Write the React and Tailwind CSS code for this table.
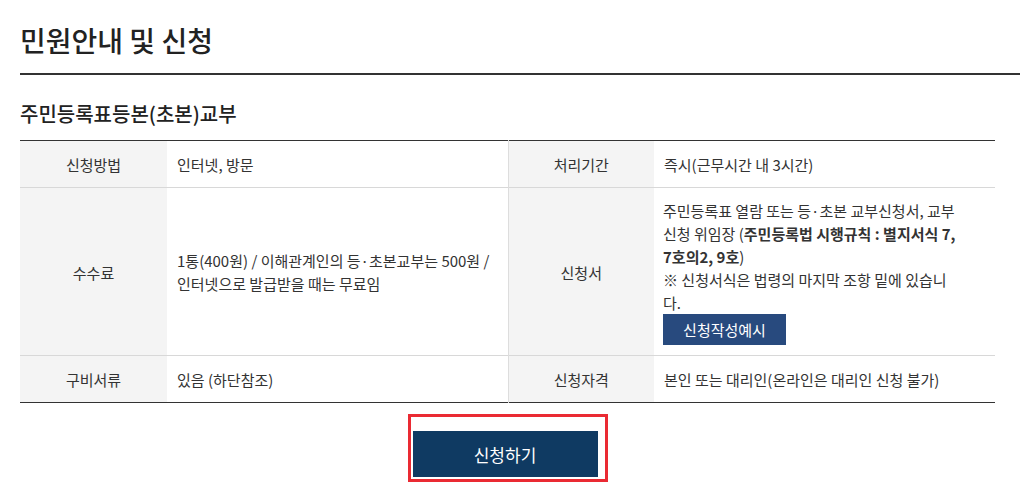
const FONT = "font-['Noto_Sans_CJK_KR','Noto_Sans',sans-serif]";

function Th({ children }) {
  return (
    <th className="bg-[#f4f4f4] text-center font-normal text-[#333] pt-[12px] pb-[11px] px-[10px] align-middle">
      {children}
    </th>
  );
}

function Td({ children, last }) {
  return (
    <td className={`text-left text-[#333] pt-[12px] pb-[11px] px-[10px] align-middle ${last ? '' : 'border-r border-[#ddd]'}`}>
      {children}
    </td>
  );
}

export default function App() {
  return (
    <div className={`${FONT} bg-white min-h-[484px] pl-5 text-[15px] leading-[23px]`}>
      <h2 className="pt-[21px] pb-[14px] text-[28px] leading-[38px] font-medium text-[#222] border-b-2 border-[#333]">
        민원안내 및 신청
      </h2>
      <h3 className="mt-[25px] text-[20px] leading-[28px] font-medium text-[#222]">주민등록표등본(초본)교부</h3>

      <table className="mt-[12px] w-[975px] table-fixed border-collapse border-t border-b border-[#333]">
        <colgroup>
          <col className="w-[147px]" />
          <col className="w-[341px]" />
          <col className="w-[146px]" />
          <col className="w-[341px]" />
        </colgroup>
        <tbody>
          <tr className="border-b border-[#d8d8d8]">
            <Th>신청방법</Th>
            <Td>인터넷, 방문</Td>
            <Th>처리기간</Th>
            <Td last>즉시(근무시간 내 3시간)</Td>
          </tr>
          <tr className="border-b border-[#d8d8d8]">
            <Th>수수료</Th>
            <Td>1통(400원) / 이해관계인의 등·초본교부는 500원 / 인터넷으로 발급받을 때는 무료임</Td>
            <Th>신청서</Th>
            <td className="text-left text-[#333] pt-[11px] pb-[10px] px-[9px] align-middle whitespace-nowrap">
              <p>
                주민등록표 열람 또는 등·초본 교부신청서, 교부
                <br />
                신청 위임장 (<b className="font-bold">주민등록법 시행규칙 : 별지서식 7,</b>
                <br />
                <b className="font-bold">7호의2, 9호</b>)
              </p>
              <p>
                ※ 신청서식은 법령의 마지막 조항 밑에 있습니
                <br />
                다.
              </p>
              <button className="w-[123px] h-[31px] bg-[#284a7e] text-white text-[15px] leading-[31px] text-center">
                신청작성예시
              </button>
            </td>
          </tr>
          <tr>
            <Th>구비서류</Th>
            <Td>있음 (하단참조)</Td>
            <Th>신청자격</Th>
            <Td last>본인 또는 대리인(온라인은 대리인 신청 불가)</Td>
          </tr>
        </tbody>
      </table>

      <div className="w-[975px] flex justify-center mt-[11px]">
        <div className="w-[200px] border-[3px] border-[#ea2a33] pl-[2px] pr-[7px] pt-[14px] pb-[2px]">
          <button className="w-[185px] h-[46px] bg-[#0f3a62] text-white text-[17px]">신청하기</button>
        </div>
      </div>
    </div>
  );
}
